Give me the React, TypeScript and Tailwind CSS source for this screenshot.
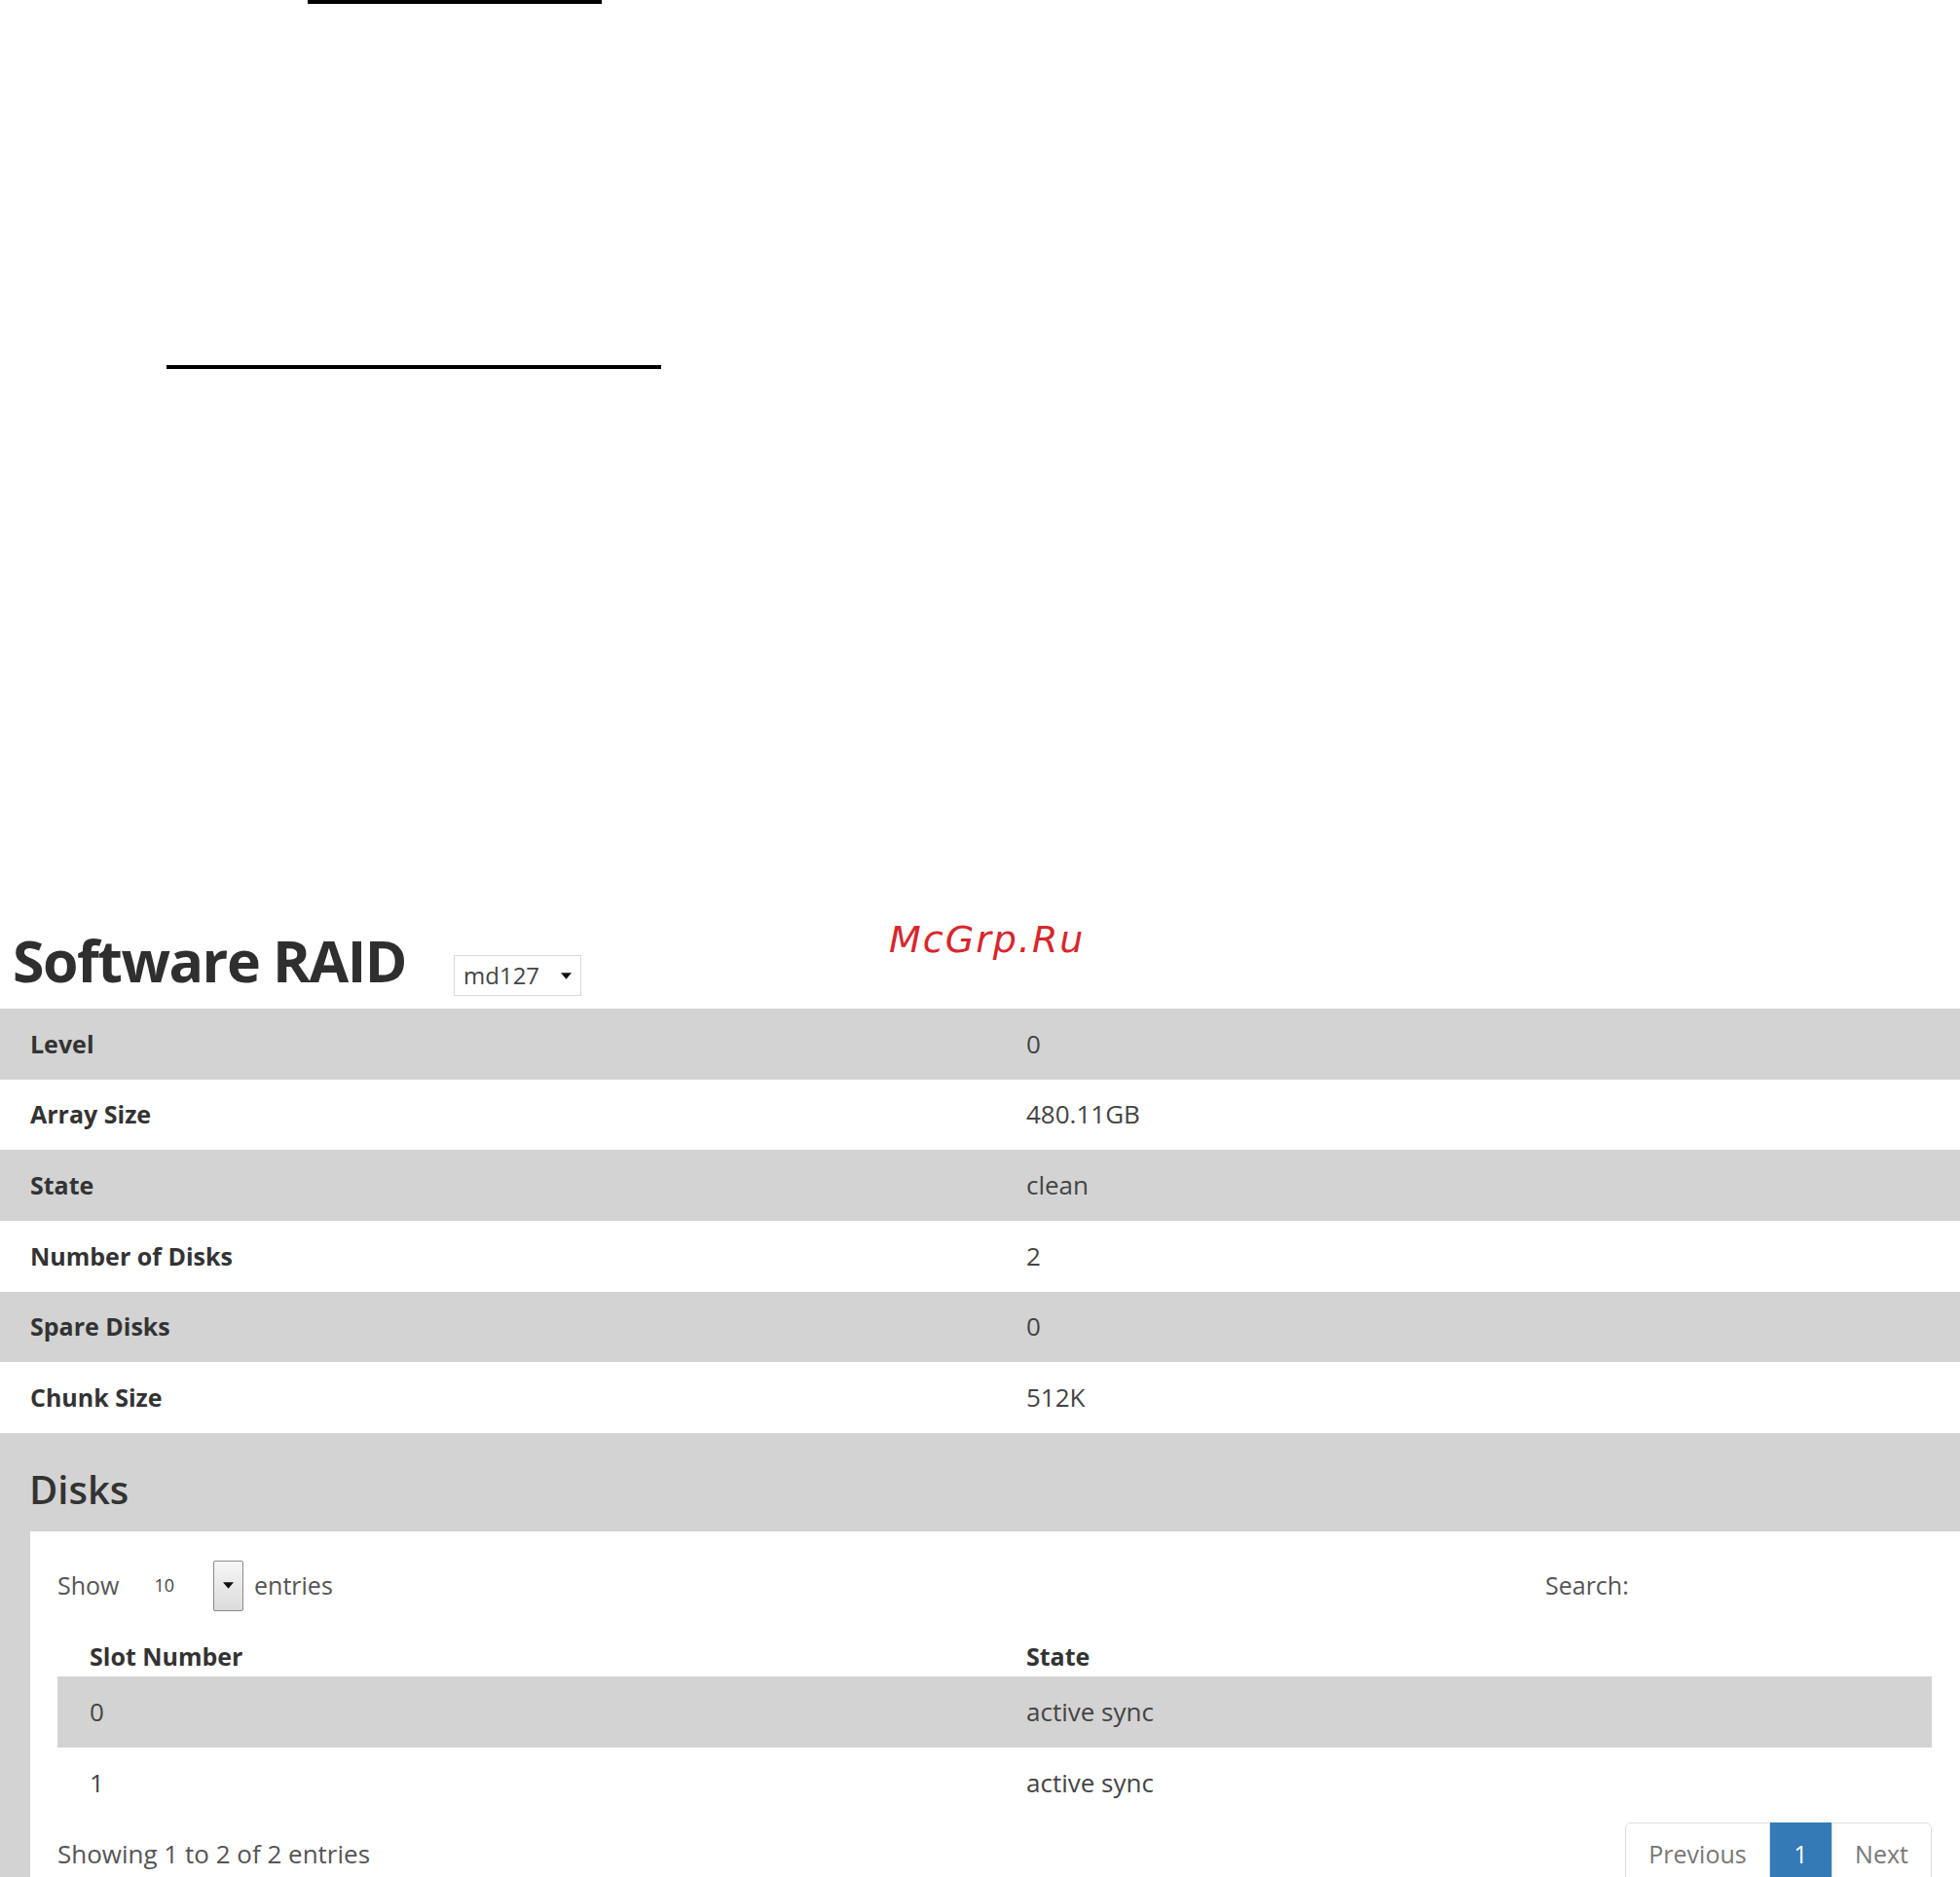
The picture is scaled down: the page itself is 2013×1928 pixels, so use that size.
const details = [
  { label: "Level", value: "0" },
  { label: "Array Size", value: "480.11GB" },
  { label: "State", value: "clean" },
  { label: "Number of Disks", value: "2" },
  { label: "Spare Disks", value: "0" },
  { label: "Chunk Size", value: "512K" },
];

const disks = [
  { slot: "0", state: "active sync" },
  { slot: "1", state: "active sync" },
];

function Caret({ className }: { className?: string }) {
  return (
    <svg viewBox="0 0 10 6" className={className} aria-hidden>
      <path d="M0 0h10L5 6z" fill="#111" />
    </svg>
  );
}

export default function App() {
  return (
    <div className="relative h-[1928px] overflow-hidden bg-white font-['Open_Sans',sans-serif] text-[#333]">
      {/* stray rules from the scanned page */}
      <div className="ml-[316px] h-[4px] w-[302px] bg-black" />
      <div className="ml-[171px] mt-[371px] h-[4px] w-[508px] bg-black" />

      <span className="absolute left-[913px] top-[946px] font-['DejaVu_Sans',sans-serif] text-[38px] italic leading-none tracking-[2px] text-[#d7262d]">
        McGrp.Ru
      </span>

      <div className="mt-[578px] flex h-[79px] items-start pl-[13px]">
        <h1 className="w-[453px] text-[59px] font-bold leading-none tracking-[-1.5px] text-[#2f2f2f]">
          Software RAID
        </h1>
        <div className="mt-[24px] flex h-[42px] w-[131px] items-center justify-between border border-[#d9d9d9] bg-white pl-[9px] pr-[9px] text-[24px] leading-none text-[#444]">
          <span>md127</span>
          <Caret className="h-[7px] w-[11px]" />
        </div>
      </div>

      <div>
        {details.map((row, i) => (
          <div
            key={row.label}
            className={`grid h-[72.67px] grid-cols-[1054px_1fr] items-center ${
              i % 2 === 0 ? "bg-[#d3d3d3]" : "bg-white"
            }`}
          >
            <span className="pl-[31px] text-[25px] font-bold text-[#333]">{row.label}</span>
            <span className="text-[26px] text-[#444]">{row.value}</span>
          </div>
        ))}
      </div>

      <section className="h-[456px] bg-[#d3d3d3]">
        <h2 className="pl-[30px] pt-[38px] text-[40px] font-semibold leading-none text-[#333]">Disks</h2>
        <div className="ml-[31px] mt-[23px] h-[400px] bg-white pl-[28px] pr-[29px] pt-[30px]">
          <div className="flex h-[52px] items-center text-[25px] text-[#555]">
            <span>Show</span>
            <span className="ml-[36px] text-[18px] text-[#444]">10</span>
            <div className="ml-[40px] flex h-[52px] w-[31px] items-center justify-center rounded-[2px] border border-[#8a8a8a] bg-gradient-to-b from-[#f6f6f6] to-[#dcdcdc]">
              <Caret className="h-[7px] w-[11px]" />
            </div>
            <span className="ml-[11px]">entries</span>
            <span className="ml-auto w-[397px]">Search:</span>
          </div>

          <div className="grid h-[67px] grid-cols-[962px_1fr] items-center pt-[26px] text-[25px] font-bold text-[#333]">
            <span className="pl-[33px]">Slot Number</span>
            <span className="pl-[33px]">State</span>
          </div>
          {disks.map((d, i) => (
            <div
              key={d.slot}
              className={`grid h-[73px] grid-cols-[962px_1fr] items-center text-[26px] text-[#444] ${
                i % 2 === 0 ? "bg-[#d3d3d3]" : "bg-white"
              }`}
            >
              <span className="pl-[33px]">{d.slot}</span>
              <span className="pl-[33px]">{d.state}</span>
            </div>
          ))}

          <div className="mt-[4px] flex h-[66px] items-center justify-between text-[#555]">
            <span className="text-[26px]">Showing 1 to 2 of 2 entries</span>
            <div className="flex h-[66px] text-[25px] text-[#777]">
              <span className="flex w-[149px] items-center justify-center rounded-l-[6px] border border-[#ddd]">
                Previous
              </span>
              <span className="flex w-[63px] items-center justify-center bg-[#337ab7] text-white">1</span>
              <span className="flex w-[103px] items-center justify-center rounded-r-[6px] border border-[#ddd]">
                Next
              </span>
            </div>
          </div>
        </div>
      </section>
    </div>
  );
}
